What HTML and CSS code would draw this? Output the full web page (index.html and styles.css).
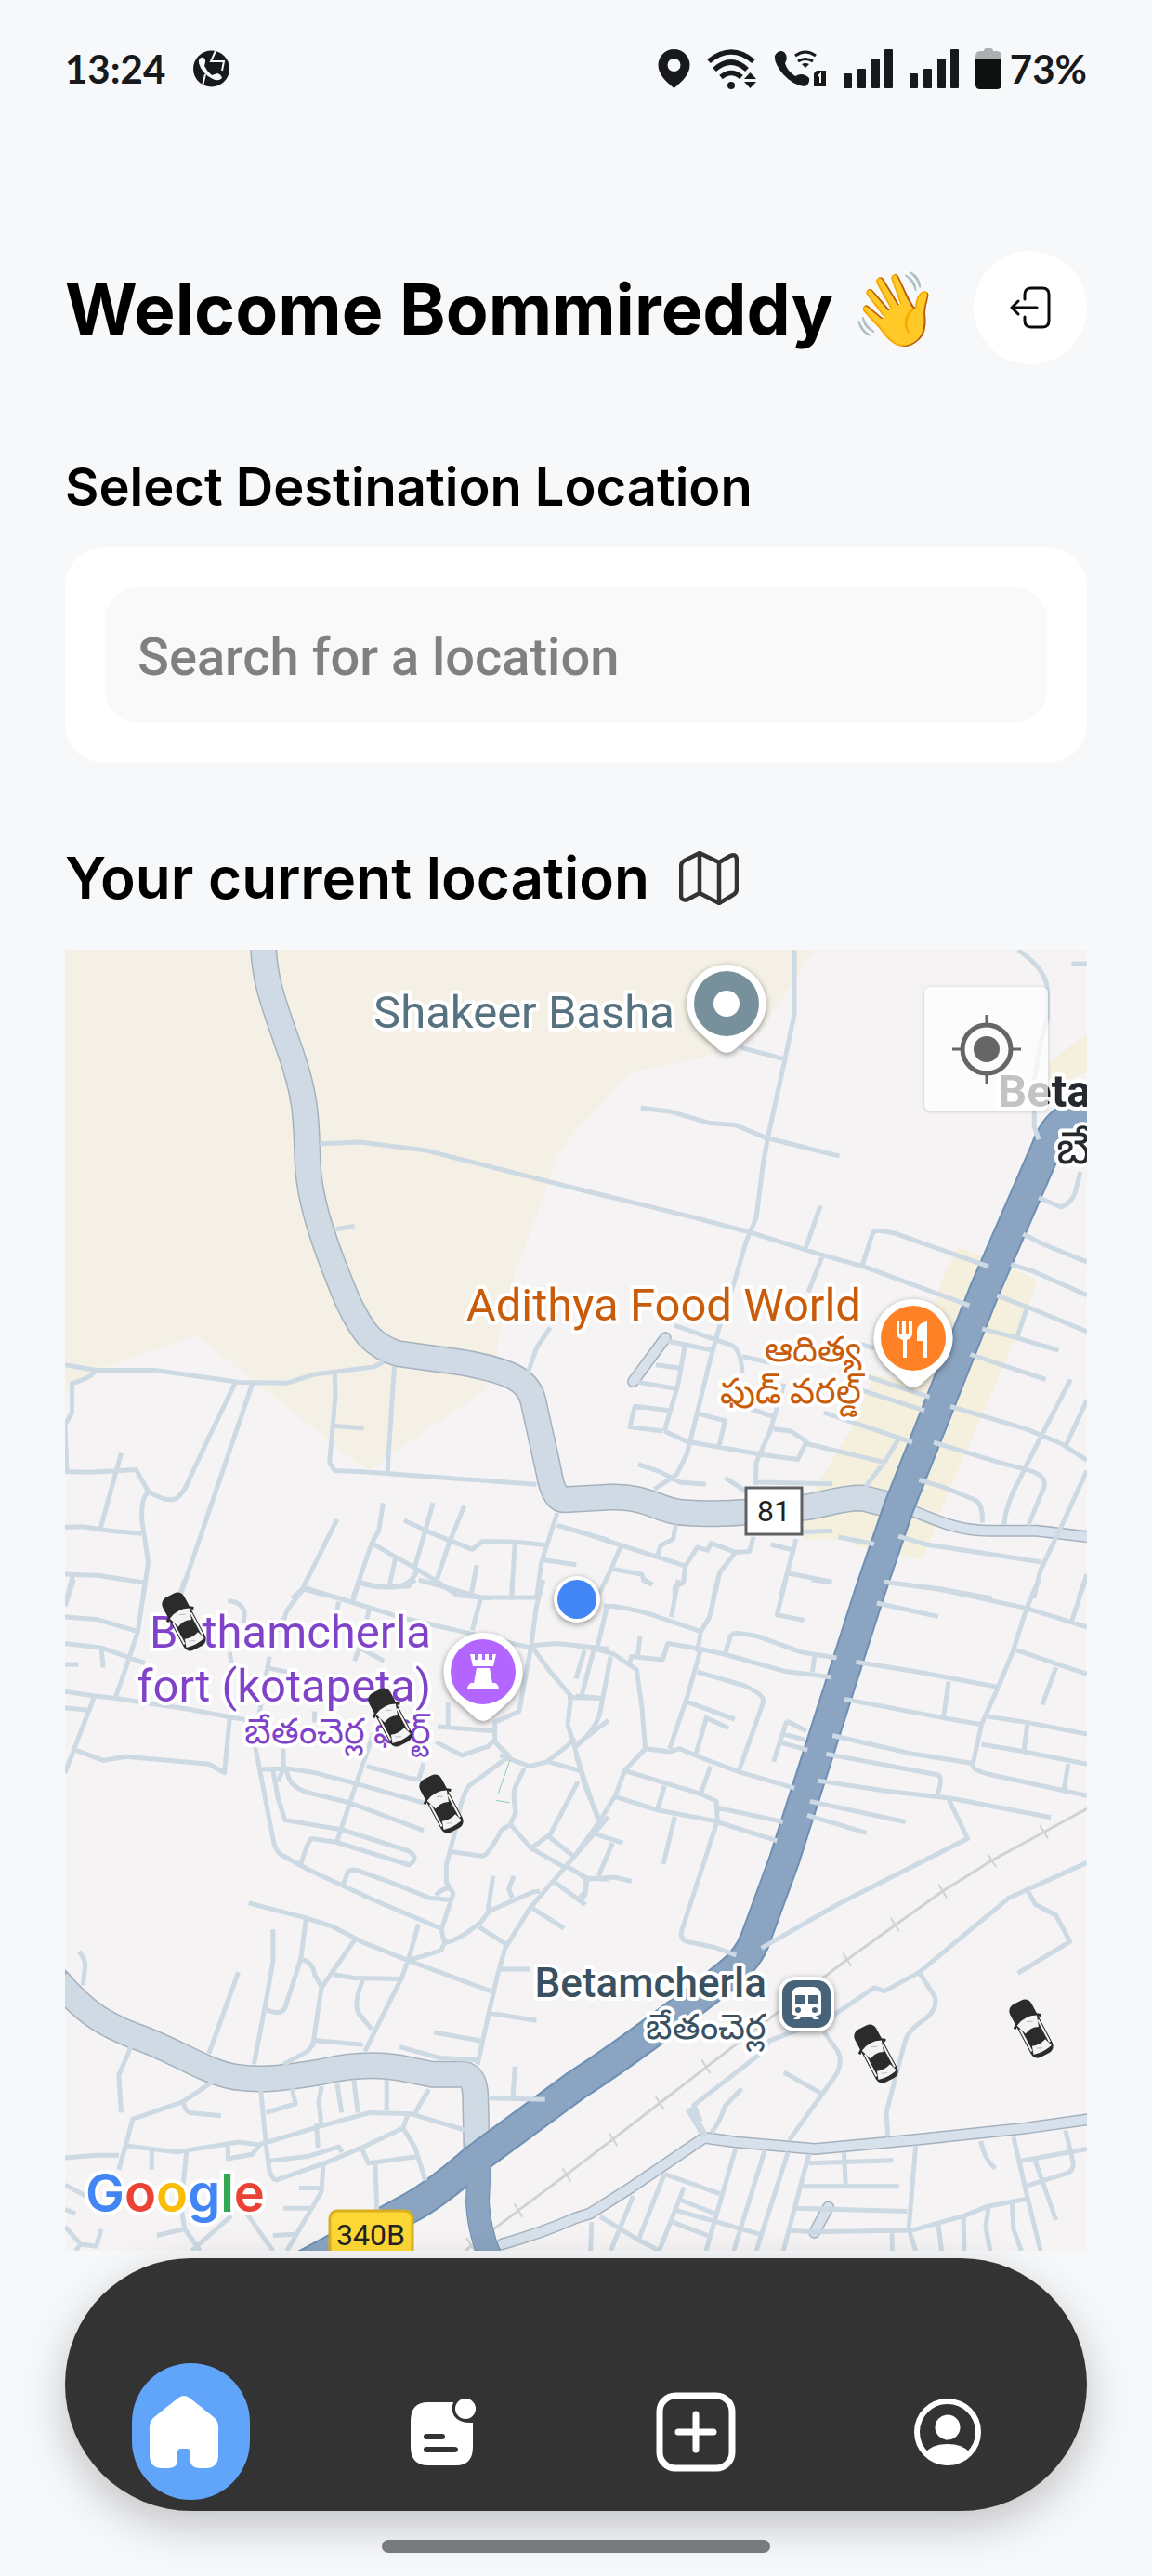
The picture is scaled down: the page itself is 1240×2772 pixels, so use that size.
FILE: index.html
```
<!DOCTYPE html>
<html lang="en">
<head>
<meta charset="utf-8">
<meta name="viewport" content="width=device-width, initial-scale=1">
<title>Home</title>
<link rel="stylesheet" href="styles.css">
</head>
<body>
<header class="status">
  <div class="status-group status-left">
    <span>13:24</span>
    <svg width="39" height="40" viewBox="0 0 39 40" aria-hidden="true">
      <circle cx="19.500" cy="20" r="19.500" fill="#17191a"/>
      <path d="M24 1 19 12H33L31 22M13 26 10 38" fill="none" stroke="#f7f8fa" stroke-width="2"/>
      <path d="M7 9C10 6 14 9 13 13L12 17Q15 23 20 27L26 25Q30 26 31 30Q27 34 21 31Q9 25 6 14Q5 11 7 9Z" fill="#f7f8fa"/>
    </svg>
  </div>
  <div class="status-group">
    <svg width="35" height="42" viewBox="0 0 35 42" aria-hidden="true"><path fill="#17191a" fill-rule="evenodd" d="M17.500 0A17 17 0 0 1 34.500 17C34.500 27 26 35 17.500 42C9 35 .5 27 .5 17A17 17 0 0 1 17.500 0ZM17.500 10A7 7 0 1 0 17.500 24A7 7 0 1 0 17.500 10Z"/></svg>
    <svg width="54" height="43" viewBox="0 0 54 43" fill="none" stroke="#17191a" stroke-width="5.500" aria-hidden="true"><path d="M2 13Q26-7 50 13M8 22Q26 6 43 22M15 30Q26 21 37 30"/><circle cx="26" cy="39" r="4" fill="#17191a" stroke="none"/><path fill="#17191a" stroke="none" d="M40 32 46.500 25 53 32ZM40 35H53L46.500 42Z"/></svg>
    <svg width="57" height="40" viewBox="0 0 57 40" aria-hidden="true"><path fill="#17191a" d="M1 6Q5-1 11 2Q16 7 12 14Q14 22 23 28Q31 23 38 30Q39 37 33 39Q21 38 10 26Q0 14 1 6Z"/><path d="M23 6Q34-2 45 6M26 12Q34 7 42 12" fill="none" stroke="#17191a" stroke-width="3"/><path fill="#17191a" d="M30 15Q34 13 38 15L34 19ZM46 22H56V39H43V25Z"/><path d="M48 28 50 26V35" fill="none" stroke="#fff" stroke-width="2"/></svg>
    <svg width="53" height="42" viewBox="0 0 53 42" fill="#17191a" aria-hidden="true"><rect y="26" width="9" height="16" rx="1"/><rect x="15" y="21" width="9" height="21" rx="1"/><rect x="30" y="10" width="9" height="32" rx="1"/><rect x="44" width="9" height="42" rx="1"/></svg>
    <svg width="53" height="42" viewBox="0 0 53 42" fill="#17191a" aria-hidden="true"><rect y="26" width="9" height="16" rx="1"/><rect x="15" y="21" width="9" height="21" rx="1"/><rect x="30" y="10" width="9" height="32" rx="1"/><rect x="44" width="9" height="42" rx="1"/></svg>
    <span class="battery">
      <svg width="28" height="44" viewBox="0 0 28 44" aria-hidden="true"><path fill="#acaeb0" d="M9 3Q9 0 12 0H16Q19 0 19 3H23Q28 3 28 9V12H0V9Q0 3 5 3Z"/><path fill="#0f1111" d="M0 11H28V39Q28 44 23 44H5Q0 44 0 39Z"/></svg>
      <span>73%</span>
    </span>
  </div>
</header>

<main class="page">
  <div class="welcome">
    <h1>Welcome Bommireddy <span class="wave">👋</span></h1>
    <button class="logout" type="button" aria-label="Log out">
      <svg width="44" height="46" viewBox="0 0 44 46" fill="none" stroke="#0b0b0b" stroke-width="3" stroke-linecap="round" stroke-linejoin="round" aria-hidden="true"><path d="M16 14V9Q16 2 23 2H35Q42 2 42 9V37Q42 44 35 44H23Q16 44 16 37V33M29 23H2M9 16 2 23 9 30"/></svg>
    </button>
  </div>

  <label class="title-search" for="destination">Select Destination Location</label>
  <div class="card">
    <input class="field" id="destination" type="text" placeholder="Search for a location">
  </div>

  <h2 class="title-map">Your current location
    <svg width="64" height="58" viewBox="0 0 64 58" fill="none" stroke="#333" stroke-width="4.500" stroke-linejoin="round" stroke-linecap="round" aria-hidden="true"><path d="M2 17Q2 12 6 10L22 2 43 12 55 5Q62 2 62 10V40Q62 45 58 47L43 56 22 45 9 52Q2 54 2 47ZM22 2V45M43 12V56"/></svg>
  </h2>

  <section class="map" aria-label="Map">
    <svg class="map-canvas" viewBox="0 0 1100 1400">
      <defs>
        <g id="car">
          <rect x="-13" y="-32" width="26" height="64" rx="8" fill="#2b2b2b"/>
          <path d="M-16-8 -12-11M16-8 12-11" stroke="#2b2b2b" stroke-width="3"/>
          <path d="M-12-10Q0-16 12-10L8 2Q0-2-8 2ZM-8 17Q0 20 8 17L11 26Q0 29-11 26Z" fill="#f3f3f3"/>
          <path d="M-11-5V22M11-5V22" stroke="#f3f3f3" stroke-width="2"/>
          <path d="M-1-9 5-6M-5 21 1 24" stroke="#bbb"/>
        </g>
        <path id="pin" d="M0-42A42 42 0 0 1 30 30L8 50Q0 56-8 50L-30 30A42 42 0 0 1 0-42Z"/>
        <path id="tick" d="M-12-15 12 15"/>
      </defs>
      <rect width="1100" height="1400" fill="#f5f3f4"/>

      <!-- land areas -->
      <svg x="0" y="-2" width="585" height="700" viewBox="0 0 1568 1568" preserveAspectRatio="none" class="tile">
        <path fill="#f4f0e5" d="M0 0H2165L2095 90 2005 195Q1960 235 1850 262L1635 300 1474 440 1420 500 1390 580 1300 780Q1255 890 1245 980L1215 1065 950 1215 880 1260 840 1240 570 1060 375 935 140 1005 80 1020 20 1060 0 1070Z"/>
      </svg>
      <svg x="550" y="-2" width="585" height="700" viewBox="0 0 1568 1568" preserveAspectRatio="none" class="tile">
        <path fill="#f5efdd" d="M1105 720 1330 800 1295 890 1060 1340 1000 1475 795 1440 790 1415 750 1425 655 1425 650 1380 700 1290 800 1150 860 1030 985 1050 1030 870 1060 790ZM1474 205 1400 255 1365 280V335L1474 300Z"/>
      </svg>

      <!-- railway -->
      <svg x="550" y="678" width="585" height="740" viewBox="0 0 1568 1568" preserveAspectRatio="none" class="tile rail">
        <path d="M1474 522 1200 640 1058 710 782 866 600 975 242 1193 0 1340-166 1438-320 1530"/>
        <g class="ticks"><use href="#tick" x="1350" y="575"/><use href="#tick" x="1200" y="640"/><use href="#tick" x="1058" y="710"/><use href="#tick" x="920" y="786"/><use href="#tick" x="782" y="866"/><use href="#tick" x="375" y="1110"/><use href="#tick" x="242" y="1193"/><use href="#tick" x="107" y="1276"/><use href="#tick" x="-27" y="1357"/><use href="#tick" x="-166" y="1438"/><use href="#tick" x="-304" y="1515"/></g>
      </svg>

      <!-- secondary roads -->
      <svg x="0" y="-2" width="585" height="700" viewBox="0 0 1568 1568" preserveAspectRatio="none" class="tile">
        <path class="casing w29" d="M572-10C575 80 600 130 650 250 700 370 695 420 700 520 705 620 760 740 815 850 860 930 890 960 960 978L1150 1000C1280 1020 1335 1040 1350 1090L1395 1260Q1408 1330 1440 1330L1574 1324C1680 1320 1720 1362 1800 1362 1900 1368 2040 1355 2140 1348 2200 1340 2240 1325 2300 1326L2390 1345"/>
        <path class="road w26" d="M572-10C575 80 600 130 650 250 700 370 695 420 700 520 705 620 760 740 815 850 860 930 890 960 960 978L1150 1000C1280 1020 1335 1040 1350 1090L1395 1260Q1408 1330 1440 1330L1574 1324C1680 1320 1720 1362 1800 1362 1900 1368 2040 1355 2140 1348 2200 1340 2240 1325 2300 1326L2390 1345"/>
      </svg>
      <svg x="0" y="678" width="585" height="740" viewBox="0 0 1568 1568" preserveAspectRatio="none" class="tile">
        <path class="casing w29" d="M-20 915C60 990 120 1015 200 1040 300 1065 400 1120 480 1132 560 1145 640 1135 740 1122 830 1105 900 1105 960 1112L1060 1128 1150 1128Q1183 1132 1184 1180L1188 1310"/>
        <path class="road w26" d="M-20 915C60 990 120 1015 200 1040 300 1065 400 1120 480 1132 560 1145 640 1135 740 1122 830 1105 900 1105 960 1112L1060 1128 1150 1128Q1183 1132 1184 1180L1188 1310"/>
      </svg>
      <svg x="550" y="678" width="585" height="740" viewBox="0 0 1568 1568" preserveAspectRatio="none" class="tile">
        <path class="casing w13" d="M-214 1515Q-100 1490 0 1455L40 1445 160 1385 370 1272 460 1282 690 1298 1000 1275 1300 1250 1500 1228M688 1488 728 1430"/>
        <path class="lane w10" d="M-214 1515Q-100 1490 0 1455L40 1445 160 1385 370 1272 460 1282 690 1298 1000 1275 1300 1250 1500 1228M688 1488 728 1430"/>
        <path class="minor w8" d="M325 1205 372 1268"/>
      </svg>
      <svg x="550" y="-2" width="585" height="700" viewBox="0 0 1568 1568" preserveAspectRatio="none" class="tile">
        <path class="casing w13" d="M950 1350C1040 1380 1100 1405 1190 1405L1330 1405 1500 1422M165 1045 258 940"/>
        <path class="lane w10" d="M950 1350C1040 1380 1100 1405 1190 1405L1330 1405 1500 1422M165 1045 258 940"/>
      </svg>

      <!-- highway -->
      <g class="highway">
        <path class="hw-case w26" d="M446 1300 444 1348Q446 1386 464 1420"/>
        <path class="hw-case w34" d="M1115 172Q1070 172 1056 214L990 366 897 601 866 692 774 980 744 1062Q736 1086 712 1104C680 1130 600 1190 550 1222L440 1303Q400 1338 373 1353L240 1425"/>
        <path class="hw w24" d="M446 1300 444 1348Q446 1386 464 1420"/>
        <path class="hw w30" d="M1115 172Q1070 172 1056 214L990 366 897 601 866 692 774 980 744 1062Q736 1086 712 1104C680 1130 600 1190 550 1222L440 1303Q400 1338 373 1353L240 1425"/>
      </g>

      <!-- streets, north-west -->
      <svg x="0" y="-2" width="585" height="700" viewBox="0 0 1568 1568" preserveAspectRatio="none" class="tile">
        <path class="minor" d="M735 472 850 468 1040 488 1568 600M780 678 835 671M0 1005 90 1018 260 1018 500 1047 640 1049 720 1028 890 1010 920 998M85 1020Q80 1035 20 1050L20 1120 0 1150 5 1260M0 1262 75 1264 205 1258 240 1310Q300 1340 325 1325L345 1305 415 1180 490 1050M540 1052 335 1555M162 1218 102 1400M0 1396 50 1395 130 1405 220 1412M238 1312Q218 1330 222 1380L240 1480 225 1568M0 1510 100 1513 225 1530M22 1515 5 1568M778 1025 780 1080 763 1240 778 1260 860 1263 1360 1293M775 1152 862 1158M950 1010 930 1265M1400 915 1360 965 1335 1025M785 1378 685 1545 655 1568M685 1545 760 1562M918 1338 905 1405 885 1435 830 1568M885 1435 1010 1495 1070 1525 1130 1560 1230 1568M850 1530Q900 1545 960 1540 1005 1530 1015 1500M955 1465 935 1540M1062 1338 1010 1490M1152 1345 1110 1430 1072 1525M978 1380 1050 1408 1175 1450 1205 1430 1300 1432 1392 1440M1188 1488 1170 1565M1298 1435 1288 1568M1420 1362 1375 1480 1360 1568M1420 1392 1568 1428M1378 1475 1475 1487"/>
      </svg>
      <!-- streets, north-east -->
      <svg x="550" y="-2" width="585" height="700" viewBox="0 0 1568 1568" preserveAspectRatio="none" class="tile">
        <path class="minor" d="M630 5V160L600 280 555 450 540 520 520 650 490 710 455 810 415 910 385 1000 350 1120 320 1220 290 1270 225 1305M475 240 600 268M187 386 275 395 385 422 460 427 545 457 760 502M0 580 340 650 500 685 700 738 830 768 1135 862M705 622 662 725M710 745 670 830M825 768 855 690Q860 680 880 682L920 688 1190 768M1275 5Q1355 50 1360 100V170Q1340 220 1322 320V430L1335 462M1430 38H1474M1335 602 1400 625Q1430 615 1440 590L1455 540M1290 690 1350 715 1474 757M1255 763 1320 780 1474 837M1215 838 1310 868 1474 925M1300 870 1272 940M1172 918 1272 940 1392 970M1138 980 1355 1040M1080 1105 1300 1160 1400 1195 1474 1235M1427 1040 1340 1180 1280 1280Q1240 1340 1235 1390M1474 1090 1410 1205M1032 1192 1220 1240 1300 1258Q1360 1270 1350 1300L1305 1392M1474 1260 1400 1395 1340 1500 1320 1568M990 1282 1060 1300 1150 1330Q1175 1340 1172 1385M930 1418 1010 1438 1340 1480M888 1528 1050 1545 1200 1568M1474 1510 1450 1568M285 910 370 935 440 955Q475 960 480 1025M480 985 560 1000M265 948 395 970M315 955 295 1050 255 1165M230 1005 300 1013M180 1047 290 1063M250 1165 155 1155 170 1105 270 1115M255 1165 320 1190 410 1203 540 1222 640 1233 665 1190 620 1165 570 1160M350 1122 430 1140 412 1203M500 1110 570 1130M600 1050 560 1165 520 1240 518 1295M525 1288 740 1292M430 1277 490 1310M180 1245 240 1262 300 1288 375 1293M665 1195 890 1240M835 1298 890 1240 930 1185M715 1120 970 1192M830 1030 1020 1083M800 1060 1005 1115M820 955 860 965M655 1408 740 1405M757 1420 860 1437M0 1405 130 1440 315 1490M130 1440 100 1500 60 1568M105 1497 190 1510 195 1522 220 1535M288 1390 280 1425 245 1440 235 1465M315 1490 350 1445 380 1452 390 1435 460 1457 500 1455 512 1420M460 1457 415 1505 395 1568M315 1490 310 1530 285 1540V1568M562 1438 630 1452M635 1425 590 1568M610 1507 738 1528"/>
      </svg>
      <!-- streets, south-west -->
      <svg x="0" y="678" width="585" height="740" viewBox="0 0 1568 1568" preserveAspectRatio="none" class="tile">
        <path class="minor" d="M25 0 0 60M0 85 90 90 210 118M232 0 210 118 180 190 145 270M345 0 330 40M0 145 105 155 230 190M0 193H38M105 155 110 200M0 255 85 265 145 270M85 265 0 440M0 292 65 297M145 270 355 295 525 320M475 315 460 440 415 420 175 403 110 412 30 388M470 48Q510 50 518 75L515 100M475 165 480 190M550 385 600 590Q605 615 620 625L700 660 890 730 1085 795M565 432 640 430 720 440 840 465 1040 510M600 435 615 500 635 548 800 570 990 618Q1025 635 992 650L780 598 712 590Q700 595 680 650M640 430Q640 470 700 485L820 508 1035 572M630 385V430L615 460M890 350 840 465 785 595M870 425 1000 453 1020 455 1035 418M800 700 815 668Q820 660 840 662L940 690 1050 725 1110 730M530 737 690 770 770 790 860 827 990 868 1228 938M1020 785 990 868 970 910 865 1075M990 868 1085 845 1095 828M1085 795 1095 828Q1140 820 1200 780L1225 755 1350 712 1370 710M1195 792 1275 832M600 797V870L580 960 545 1105M695 775 680 865 635 975Q625 995 580 980M680 865Q715 870 720 900L740 928M835 822 775 890 740 930 715 1060 700 1075 630 1105M775 900 835 908 970 910M860 910Q830 970 848 990L885 1025M718 1050 860 1060M965 1065 1080 1090 1190 1095M1065 1032 1205 1052M500 895 415 1080M40 848Q60 865 58 880L52 925M1568 540 1470 630 1340 750 1270 840 1248 900 1225 980 1190 1105M1248 888H1340M1225 988 1360 1005M1350 750 1440 795M1405 685 1500 740M1440 650 1505 680 1568 683M1505 680 1500 720 1480 730M1235 675 1220 755M1295 675 1280 705 1290 725M1225 1182 1385 1185M1298 1110 1292 1182M1285 400 1165 470Q1140 500 1130 560L1100 650V690L1120 715 1085 800M1070 720Q1090 700 1115 705M1115 620 1205 630Q1220 628 1260 570L1285 558 1300 530Q1290 490 1300 470L1325 430M1285 558 1345 612 1440 655M1345 612 1400 580 1480 460M1395 585 1470 632M1255 400 1340 425 1390 415 1450 378 1470 360M1345 150 1310 300 1240 325V370L1285 405M1075 335 1240 345M1070 370 1145 400 1220 380 1240 365M1105 280V335M1345 150 1400 210 1460 265 1450 330 1470 380 1500 470 1540 545M1345 150 1420 145 1568 158M1450 268 1545 270M1525 160 1490 265M1395 415 1485 435M1470 380 1568 320M1380 0 1360 60 1345 150M1200 40H1360M690 18 980 88 1345 155M850 0 830 50M850 5 900 15H990L1010 0M790 50 770 120M690 18 640 70 620 120M590 175 570 260 545 385M580 200 640 210M1020 0 1200 40 1175 115M1290 0V35M880 60 870 90M835 185 850 155 920 185M720 300V325"/>
        <path class="minor" d="M190 1065 155 1130 162 1215M425 1145 340 1190 195 1230 175 1290 155 1345M340 1190Q345 1210 360 1215L450 1222M0 1318 90 1312H155M175 1290 320 1305 500 1282 560 1288 740 1245 880 1215 1000 1218 1155 1255M250 1300V1345M350 1305 335 1430 345 1480M565 1165 580 1290 590 1350 605 1370M655 1160 665 1195 580 1215M740 1155 732 1190 740 1245M785 1150 798 1215M833 1140 845 1215M928 1140V1210M1050 1162 1010 1215M470 1285V1320L540 1310 560 1290M590 1325 700 1315 790 1293 800 1305M605 1370 750 1330 855 1295 975 1250 990 1218M725 1240 730 1295M975 1250 1010 1295 1040 1370M855 1295 875 1330 1020 1315M895 1330 900 1440M745 1330 740 1395 640 1530M675 1387H740M630 1433H715M520 1440 600 1530M600 1495 665 1492M480 1450 365 1530M265 1495 345 1480 390 1530M0 1380 60 1405M0 1435 30 1445M0 1475 45 1515 90 1520 105 1480M45 1515 30 1530"/>
        <path d="M1283 412 1250 487M1243 503 1283 508" fill="none" stroke="#86d3a8" stroke-width="1"/>
      </svg>
      <!-- streets, south-east -->
      <svg x="550" y="678" width="585" height="740" viewBox="0 0 1568 1568" preserveAspectRatio="none" class="tile">
        <path class="minor" d="M80 60Q140 60 220 80L360 118 350 165M295 0 275 85M410 0 385 85 360 118M90 60 60 158M190 0 220 10M0 150 60 158 110 170 175 205 190 290 200 385M155 190 160 175 250 182 265 145 360 158 430 170 600 208 735 222M185 128 178 175M430 170 445 130Q450 120 470 122L520 128 650 165 752 178M688 175 682 210M360 158 320 270 270 385M350 210 480 240Q545 260 540 280L470 435M320 278 458 318M375 315 440 338M378 310 345 400M100 175 70 300Q60 340 0 380M25 160 0 225M0 265 75 270M140 435 200 385 270 392 300 385 350 402 470 438 630 475M0 400 65 550M0 625 60 560 115 490 140 435 360 488 405 505 408 550 305 800Q300 820 320 825L400 838 462 856M115 495 235 525 400 550 580 595M255 470 235 525M388 425 360 488M410 520 597 552M285 540 252 648M50 578 135 600M105 600 65 675M0 665 30 683 110 678 160 687M30 683 28 710 10 725 25 742M605 0 580 80 658 92M680 0 738 6M608 322 665 345M608 322 570 415M600 352 660 365M595 372 668 388M890 5 1050 22 1300 65 1474 108M868 53 1045 84M1335 0 1300 65 1260 165 1215 250 1170 330 1145 420Q1140 435 1200 445L1474 492M1470 0 1430 95M1270 160 1380 190 1474 215M1385 200 1345 285M808 187 1000 212 1220 245M1075 232 1060 315M775 272 1060 315 1170 330M1190 312 1300 325 1474 352M1170 375 1280 390 1474 420M1302 330 1292 390M1420 420 1408 478M740 355 960 395 1140 418M722 397 1045 445Q1060 450 1042 492M697 458 900 482 1080 498 1370 542M675 505 950 552M667 537 838 577M1075 500 1130 590 760 738 535 840M1474 645 1250 725 990 895 890 938 860 930 730 1000 560 1050 525 1085 340 1198 360 1235M1300 705 1325 740 1385 765 1425 825 1275 897M990 895 1035 950Q1045 975 1010 1000 960 1025 950 1050L930 1110 895 1215 900 1270M715 1030 755 1075Q775 1105 740 1140L615 1278M600 1123 705 1170M478 1160 430 1200Q410 1245 390 1260"/>
        <path class="minor" d="M460 1298 375 1530M545 1300 455 1530M612 1305 520 1530M672 1310 598 1530M255 1355 415 1400M255 1355 180 1505M312 1385 240 1530M305 1415 400 1445M290 1438 530 1492M280 1465 380 1495M165 1405 100 1530M45 1465 42 1530M70 1452 180 1505 240 1530M672 1330 915 1324M655 1383H932M773 1305 778 1382M635 1433 955 1440M610 1483 680 1487 970 1483M980 1290 960 1480 980 1530M912 1490V1530M970 1483 1120 1450 1190 1428 1300 1412M1045 1468 1055 1530M1118 1450 1120 1530M1190 1430 1182 1475 1195 1530M1258 1420 1262 1480 1285 1530M1262 1270 1300 1400 1340 1530M1285 1325 1474 1298M1412 1255 1435 1330Q1435 1350 1410 1355L1300 1382M1325 1325 1385 1460M1168 1280Q1180 1325 1210 1342"/>
      </svg>

      <!-- road shields -->
      <rect x="733" y="579" width="60" height="50" fill="#fff" stroke="#5f6062" stroke-width="3"/>
      <text x="763" y="615" class="shield" text-anchor="middle">81</text>
      <rect x="285" y="1357" width="89" height="60" rx="8" fill="#fdd835" stroke="#d9ae22" stroke-width="3"/>
      <text x="329" y="1394" class="shield" text-anchor="middle">340B</text>

      <!-- place labels -->
      <g class="label" text-anchor="end">
        <text x="656" y="84" fill="#567180">Shakeer Basha</text>
        <g fill="#c95c0a">
          <text x="857" y="399">Adithya Food World</text>
          <text x="857" y="443" class="local">ఆదిత్య</text>
          <text x="857" y="488" class="local">ఫుడ్ వరల్డ్</text>
        </g>
        <g fill="#7f42c8">
          <text x="394" y="751">Bethamcherla</text>
          <text x="394" y="809">fort (kotapeta)</text>
          <text x="394" y="854" class="local">బేతంచెర్ల ఫోర్ట్</text>
        </g>
        <g fill="#3a5161">
          <text x="755" y="1127" class="station">Betamcherla</text>
          <text x="755" y="1172" class="local">బేతంచెర్ల</text>
        </g>
      </g>
      <g class="label town">
        <text x="1004" y="169">Betamcherla</text>
        <text x="1067" y="230" class="town-local">బేతంచెర్ల</text>
      </g>

      <!-- pins -->
      <g transform="translate(712 58)"><use href="#pin" class="pin"/><circle r="35" fill="#78909c"/><circle r="14" fill="#fff"/></g>
      <g transform="translate(913 418)"><use href="#pin" class="pin"/><circle r="35" fill="#ff8126"/><path fill="#fff" d="M-18-18H-15V-5H-12V-18H-8V-5H-5V-18H-1V-5Q-1 0-7 2V21H-11V2Q-18 0-18-5ZM15-18V21H11V3H4V-8Q5-17 15-18Z"/></g>
      <g transform="translate(450 777)"><use href="#pin" class="pin"/><circle r="35" fill="#b266ff"/><path fill="#fff" d="M-14-19H-9V-13H-5V-19H-1V-13H2V-19H6V-13H10V-19H14L11-6H-11ZM-7-4H7L10 12H-10ZM-13 12H13Q17 14 17 19H-17Q-17 14-13 12Z"/></g>
      <g transform="translate(798 1134)"><rect class="pin" x="-30" y="-29" width="60" height="59" rx="18"/><rect x="-26" y="-25" width="52" height="51" rx="14" fill="#47637a"/><path fill="#fff" fill-rule="evenodd" d="M-8-18H8Q16-17 16-8V10Q15 13 10 13L14 17H8L5 14H-5L-8 17H-14L-10 13Q-15 13-16 10V-8Q-16-17-8-18ZM-12-9V1H-2V-9ZM2-9V1H12V-9ZM-12 7A3 3 0 1 0-6 7A3 3 0 1 0-12 7ZM6 7A3 3 0 1 0 12 7A3 3 0 1 0 6 7Z"/></g>
      <circle class="pin" cx="551" cy="699" r="25"/><circle cx="551" cy="699" r="21" fill="#4285f4"/>

      <!-- cars -->
      <use href="#car" transform="translate(128 723) rotate(-28)"/>
      <use href="#car" transform="translate(350 826) rotate(-28)"/>
      <use href="#car" transform="translate(405 919) rotate(-28)"/>
      <use href="#car" transform="translate(873 1188) rotate(-28)"/>
      <use href="#car" transform="translate(1040 1161) rotate(-28)"/>

      <text x="22" y="1358" class="label google"><tspan fill="#4285f4">G</tspan><tspan fill="#ea4335">o</tspan><tspan fill="#fbbc05">o</tspan><tspan fill="#4285f4">g</tspan><tspan fill="#34a853">l</tspan><tspan fill="#ea4335">e</tspan></text>
    </svg>
    <button class="locate" type="button" aria-label="My location">
      <svg width="74" height="74" viewBox="0 0 74 74" fill="none" stroke="#666" aria-hidden="true"><circle cx="37" cy="37" r="26" stroke-width="5"/><circle cx="37" cy="37" r="14" fill="#666" stroke="none"/><path d="M37 0V13M37 61V74M0 37H13M61 37H74" stroke-width="3"/></svg>
    </button>
  </section>
</main>

<footer class="dock">
  <nav class="tabs" aria-label="Main">
    <a class="tab tab-active" href="#home" aria-label="Home">
      <svg width="76" height="78" viewBox="0 0 76 78" aria-hidden="true"><path fill="#fff" d="M31 3Q38-3 45 3L70 23Q75 27 75 34V64Q75 78 61 78H57Q45 78 45 70V61Q45 57 41 57H35Q31 57 31 61V70Q31 78 19 78H15Q1 78 1 64V34Q1 27 6 23Z"/></svg>
    </a>
    <a class="tab" href="#rides" aria-label="Rides">
      <svg width="72" height="72" viewBox="0 0 72 72" aria-hidden="true"><path fill="#fff" fill-rule="evenodd" d="M20 4H47Q44 12 48 19Q54 27 68 26V52Q68 72 50 72H20Q1 72 1 52V24Q1 4 20 4ZM18 38Q15 38 15 41T18 44H35Q38 44 38 41T35 38ZM18 52Q15 52 15 55T18 58H48Q52 58 52 55T48 52Z"/><circle cx="60" cy="11" r="11" fill="#fff"/></svg>
    </a>
    <a class="tab" href="#add" aria-label="Add">
      <svg width="86" height="86" viewBox="0 0 86 86" fill="none" stroke="#fff" stroke-linecap="round" aria-hidden="true"><rect x="4" y="4" width="78" height="78" rx="17" stroke-width="7"/><path d="M43 24V62M24 43H62" stroke-width="7"/></svg>
    </a>
    <a class="tab" href="#profile" aria-label="Profile">
      <svg width="72" height="72" viewBox="0 0 72 72" aria-hidden="true"><circle cx="36" cy="36" r="33" fill="none" stroke="#fff" stroke-width="6"/><circle cx="36" cy="31" r="13.500" fill="#fff"/><path fill="#fff" d="M12 58Q20 49 36 49T60 58Q50 70 36 70T12 58Z"/></svg>
    </a>
  </nav>
  <div class="home-bar"></div>
</footer>
</body>
</html>
```
FILE: styles.css
```
* { box-sizing: border-box; }

body {
  margin: 0;
  background: #f7f8fa;
  color: #000;
  font-family: Inter, "Liberation Sans", sans-serif;
}

button {
  border: 0;
  padding: 0;
  cursor: pointer;
}

svg { display: block; flex: none; }

/* status bar */
.status {
  display: flex;
  justify-content: space-between;
  padding: 50px 70px 0;
  color: #17191a;
  font: 700 42px/48px Lato, sans-serif;
}

.status-group { display: flex; align-items: center; gap: 18px; }
.status-left { gap: 30px; }
.battery { display: flex; align-items: center; gap: 9px; }

/* page */
.page { padding: 172px 70px 0; }

.welcome {
  display: flex;
  align-items: center;
  justify-content: space-between;
}

h1 {
  margin: 0;
  padding-top: 4px;
  font-size: 75px;
  line-height: 100px;
  font-weight: 700;
}

.wave { font-size: 78px; line-height: 80px; }

.logout {
  display: flex;
  align-items: center;
  justify-content: center;
  flex: none;
  width: 122px;
  height: 122px;
  border-radius: 50%;
  background: #fff;
}

.title-search {
  display: block;
  margin: 96px 0 29px;
  font-size: 56px;
  line-height: 72px;
  font-weight: 600;
}

.card {
  padding: 43px;
  border-radius: 42px;
  background: #fff;
}

.field {
  display: block;
  width: 100%;
  height: 146px;
  padding: 4px 35px 0;
  border: 0;
  border-radius: 35px;
  background: #f9f9f9;
  font: 500 56px/72px Roboto, sans-serif;
}

.field::placeholder { color: #808080; opacity: 1; }

.title-map {
  display: flex;
  align-items: center;
  gap: 32px;
  margin: 84px 0 37px;
  font-size: 62px;
  line-height: 80px;
  font-weight: 600;
}

/* map */
.map { position: relative; overflow: hidden; }
.map-canvas { width: 100%; height: auto; }
.tile { overflow: visible; }
.tile path, .tile use { vector-effect: non-scaling-stroke; }

.minor, .casing, .road, .lane, .hw, .hw-case {
  fill: none;
  stroke-linejoin: round;
}

.minor { stroke: #cdd9e3; stroke-width: 5; }
.casing { stroke: #a5b2be; stroke-linecap: round; }
.road { stroke: #cfdae4; }
.lane { stroke: #d6e1eb; stroke-linecap: round; }
.hw { stroke: #8aa4c1; }
.hw-case { stroke: #6d90b4; }
.w8 { stroke-width: 8; }
.w10 { stroke-width: 10; }
.w13 { stroke-width: 13; }
.w24 { stroke-width: 24; }
.w26 { stroke-width: 26; }
.w29 { stroke-width: 29; }
.w30 { stroke-width: 30; }
.w34 { stroke-width: 34; }

.rail { fill: none; stroke: #d2d2d2; stroke-width: 3; }
.ticks { stroke-width: 5; }

.label {
  font: 400 49px Roboto, "Noto Sans", sans-serif;
  stroke: #fff;
  stroke-width: 8;
  stroke-linejoin: round;
  paint-order: stroke;
}

.local { font-size: 38px; }
.station { font-size: 44px; font-weight: 500; }
.town { fill: #25282c; font-weight: 700; }
.town-local { font-weight: 400; }
.google { font-family: Inter, sans-serif; font-size: 56px; font-weight: 600; }
.shield { font: 400 32px Roboto, sans-serif; fill: #222; }
.pin { fill: #fff; filter: drop-shadow(0 2px 3px rgb(0 0 0 / 40%)); }

.locate {
  position: absolute;
  top: 40px;
  right: 42px;
  display: flex;
  align-items: center;
  justify-content: center;
  width: 133px;
  height: 133px;
  border-radius: 6px;
  background: rgb(255 255 255 / 72%);
  box-shadow: 0 1px 4px rgb(0 0 0 / 20%);
}

/* bottom navigation */
.dock { padding: 8px 70px 25px; }

.tabs {
  position: relative;
  display: grid;
  grid-template-columns: repeat(4, 1fr);
  justify-items: center;
  align-items: center;
  padding: 113px 14px 12px 0;
  border-radius: 136px;
  background: #333;
  box-shadow: 0 16px 48px rgb(0 0 0 / 22%);
}

.tab {
  display: flex;
  align-items: center;
  justify-content: center;
  width: 127px;
  height: 147px;
  border-radius: 64px;
}

.tab-active { padding-right: 16px; background: #60a5fa; }

.home-bar {
  position: relative;
  width: 38%;
  height: 14px;
  margin: 31px auto 0;
  border-radius: 7px;
  background: #797a7c;
}
```
